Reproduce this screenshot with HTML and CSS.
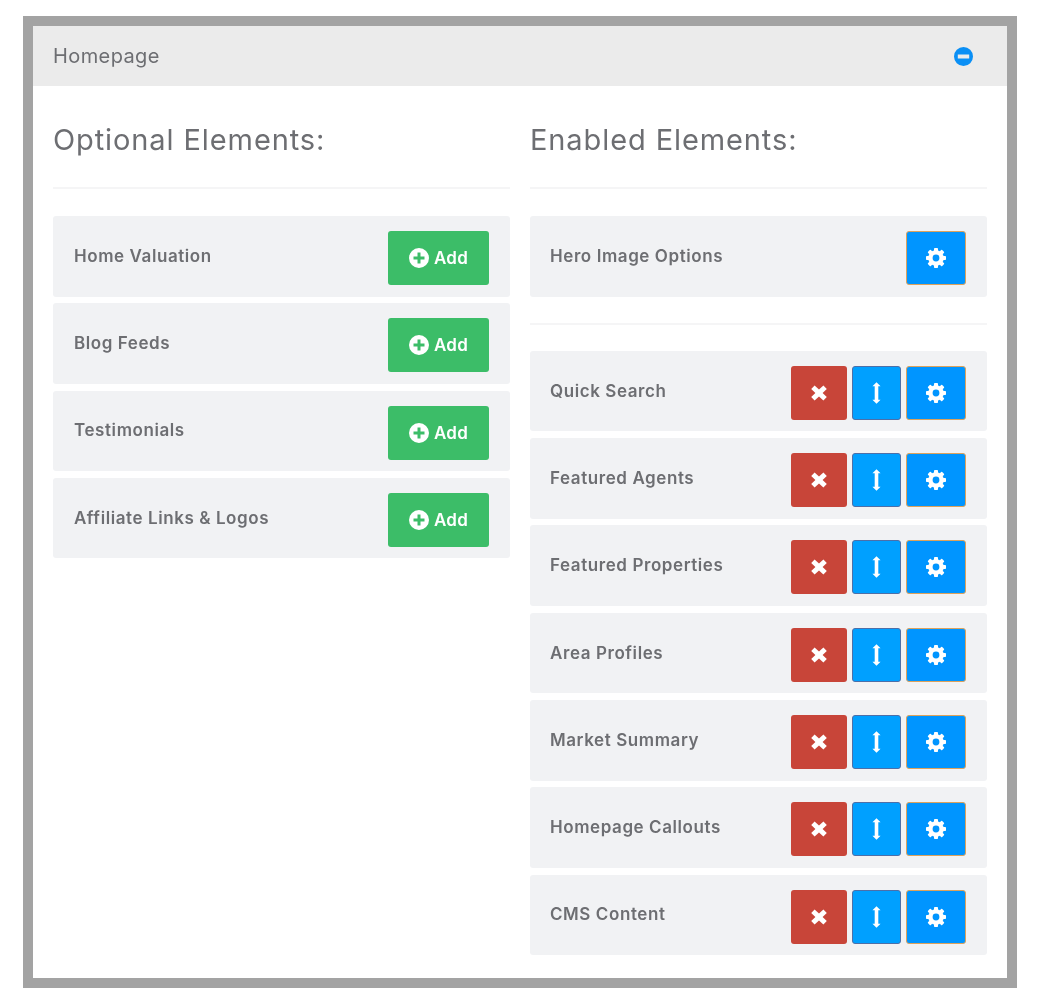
FILE: index.html
```html
<!DOCTYPE html>
<html lang="en">
<head>
<meta charset="UTF-8" />
<meta name="viewport" content="width=device-width, initial-scale=1" />
<title>Homepage</title>
<link rel="stylesheet" href="styles.css">
</head>
<body>

<svg class="defs" aria-hidden="true">
  <symbol id="i-cog" viewBox="0 0 20 20">
    <circle cx="10" cy="10" r="5.600" fill="none" stroke="#fff" stroke-width="4.400"/>
    <rect x="8" y="0" width="4" height="4" rx="0.800"/>
    <rect x="8" y="0" width="4" height="4" rx="0.800" transform="rotate(45 10 10)"/>
    <rect x="8" y="0" width="4" height="4" rx="0.800" transform="rotate(90 10 10)"/>
    <rect x="8" y="0" width="4" height="4" rx="0.800" transform="rotate(135 10 10)"/>
    <rect x="8" y="0" width="4" height="4" rx="0.800" transform="rotate(180 10 10)"/>
    <rect x="8" y="0" width="4" height="4" rx="0.800" transform="rotate(225 10 10)"/>
    <rect x="8" y="0" width="4" height="4" rx="0.800" transform="rotate(270 10 10)"/>
    <rect x="8" y="0" width="4" height="4" rx="0.800" transform="rotate(315 10 10)"/>
  </symbol>
  <symbol id="i-times" viewBox="0 0 16 16">
    <path d="M3.600.6 8 4.600 12.400.6 15.800 4 11.600 8l4.200 4-3.400 3.400L8 11.400l-4.400 4L.2 12l4.200-4L.2 4z"/>
  </symbol>
  <symbol id="i-move" viewBox="0 0 10 24">
    <path d="M5 0 9.500 4.500 7 4.500 7 19.500 9.500 19.500 5 24 .5 19.500 3 19.500 3 4.500 .5 4.500z"/>
  </symbol>
  <symbol id="i-plus" viewBox="0 0 20 20">
    <path fill-rule="evenodd" d="M10 0a10 10 0 1 1 0 20a10 10 0 0 1 0-20zM8.500 4.500v4h-4v3h4v4h3v-4h4v-3h-4v-4z"/>
  </symbol>
  <symbol id="i-minus" viewBox="0 0 20 20">
    <path fill-rule="evenodd" d="M10 0a10 10 0 1 1 0 20a10 10 0 0 1 0-20zM4 8v4h12V8z"/>
  </symbol>
</svg>

<div class="frame">
  <div class="panel-head">
    <span>Homepage</span>
    <svg class="toggle"><use href="#i-minus"/></svg>
  </div>

  <div class="columns">
    <!-- left side -->
    <div class="col optional">
      <h2>Optional Elements:</h2>
      <hr>
      <div class="row">
        <span>Home Valuation</span>
        <div class="btns"><button class="btn add"><svg><use href="#i-plus"/></svg>Add</button></div>
      </div>
      <div class="row">
        <span>Blog Feeds</span>
        <div class="btns"><button class="btn add"><svg><use href="#i-plus"/></svg>Add</button></div>
      </div>
      <div class="row">
        <span>Testimonials</span>
        <div class="btns"><button class="btn add"><svg><use href="#i-plus"/></svg>Add</button></div>
      </div>
      <div class="row">
        <span>Affiliate Links &amp; Logos</span>
        <div class="btns"><button class="btn add"><svg><use href="#i-plus"/></svg>Add</button></div>
      </div>
    </div>

    <!-- right side -->
    <div class="col">
      <h2>Enabled Elements:</h2>
      <hr>
      <div class="row">
        <span>Hero Image Options</span>
        <div class="btns"><button class="btn cog"><svg><use href="#i-cog"/></svg></button></div>
      </div>
      <hr class="second">
      <div class="row">
        <span>Quick Search</span>
        <div class="btns">
          <button class="btn del"><svg><use href="#i-times"/></svg></button>
          <button class="btn move"><svg><use href="#i-move"/></svg></button>
          <button class="btn cog"><svg><use href="#i-cog"/></svg></button>
        </div>
      </div>
      <div class="row">
        <span>Featured Agents</span>
        <div class="btns">
          <button class="btn del"><svg><use href="#i-times"/></svg></button>
          <button class="btn move"><svg><use href="#i-move"/></svg></button>
          <button class="btn cog"><svg><use href="#i-cog"/></svg></button>
        </div>
      </div>
      <div class="row">
        <span>Featured Properties</span>
        <div class="btns">
          <button class="btn del"><svg><use href="#i-times"/></svg></button>
          <button class="btn move"><svg><use href="#i-move"/></svg></button>
          <button class="btn cog"><svg><use href="#i-cog"/></svg></button>
        </div>
      </div>
      <div class="row">
        <span>Area Profiles</span>
        <div class="btns">
          <button class="btn del"><svg><use href="#i-times"/></svg></button>
          <button class="btn move"><svg><use href="#i-move"/></svg></button>
          <button class="btn cog"><svg><use href="#i-cog"/></svg></button>
        </div>
      </div>
      <div class="row">
        <span>Market Summary</span>
        <div class="btns">
          <button class="btn del"><svg><use href="#i-times"/></svg></button>
          <button class="btn move"><svg><use href="#i-move"/></svg></button>
          <button class="btn cog"><svg><use href="#i-cog"/></svg></button>
        </div>
      </div>
      <div class="row">
        <span>Homepage Callouts</span>
        <div class="btns">
          <button class="btn del"><svg><use href="#i-times"/></svg></button>
          <button class="btn move"><svg><use href="#i-move"/></svg></button>
          <button class="btn cog"><svg><use href="#i-cog"/></svg></button>
        </div>
      </div>
      <div class="row">
        <span>CMS Content</span>
        <div class="btns">
          <button class="btn del"><svg><use href="#i-times"/></svg></button>
          <button class="btn move"><svg><use href="#i-move"/></svg></button>
          <button class="btn cog"><svg><use href="#i-cog"/></svg></button>
        </div>
      </div>
    </div>
  </div>
</div>

</body>
</html>
```

FILE: styles.css
```css
/* --- Reset & basics --- */
* {
  margin: 0; padding: 0; box-sizing: border-box;
}
body, html {
  background: #fff;
  font-family: Inter, 'Liberation Sans', sans-serif;
  color: #6d6e72;
}
.defs {
  display: none;
}

/* --- Outer frame --- */
.frame {
  width: 994px;
  height: 972px;
  margin: 16px 0 0 23px;
  border: 10px solid #a3a3a3;
  background: #fff;
  filter: blur(0.5px);
}

/* --- Header bar --- */
.panel-head {
  height: 60px;
  background: #ebebeb;
  padding: 0 34px 0 20px;
  display: flex;
  align-items: center;
  justify-content: space-between;
  font-size: 20px;
  letter-spacing: 0.4px;
}
.panel-head span {
  margin-top: -1px;
}
.toggle {
  width: 19px;
  height: 19px;
  fill: #0a8ff5;
}

/* --- Columns --- */
.columns {
  display: grid;
  grid-template-columns: 457px 456.5px;
  column-gap: 20px;
  padding: 0 20px;
}
.col h2 {
  font-size: 29px;
  font-weight: 400;
  letter-spacing: 0.9px;
  line-height: 36px;
  margin-top: 36px;
}
.col hr {
  border: 0;
  height: 2px;
  background: #f5f5f6;
  margin-top: 29px;
  margin-bottom: 27px;
}
.col hr.second {
  margin-top: 26.5px;
  margin-bottom: 25.9px;
}

/* --- Rows --- */
.row {
  height: 80.5px;
  margin-bottom: 6.8px;
  background: #f1f2f4;
  border-radius: 3px;
  padding: 0 20.5px 0 20px;
  display: flex;
  align-items: center;
  justify-content: space-between;
  font-size: 17px;
  font-weight: 600;
  letter-spacing: 0.58px;
}
.optional .row {
  padding: 0 21px;
}
.row > span {
  margin-top: -1px;
}
.btns {
  display: flex;
  gap: 5px;
  padding-top: 3.4px;
}

/* --- Buttons --- */
.btn {
  height: 54px;
  border: 0;
  border-radius: 3px;
  color: #fff;
  fill: #fff;
  font-family: inherit;
  display: flex;
  align-items: center;
  justify-content: center;
}
.add {
  width: 101px;
  background: #3cbd68;
  font-size: 17px;
  font-weight: 600;
  letter-spacing: 0.3px;
  gap: 5px;
}
.add svg {
  width: 20px;
  height: 20px;
}
.del {
  width: 56px;
  background: #c84539;
}
.del svg {
  width: 16px;
  height: 16px;
}
.move {
  width: 49px;
  background: #00a0ff;
  border: 1px solid #4d6fa8;
}
.move svg {
  width: 9px;
  height: 24px;
}
.cog {
  width: 60px;
  background: #0095ff;
  border: 1px solid #dca25c;
}
.cog svg {
  width: 20px;
  height: 20px;
}
```
